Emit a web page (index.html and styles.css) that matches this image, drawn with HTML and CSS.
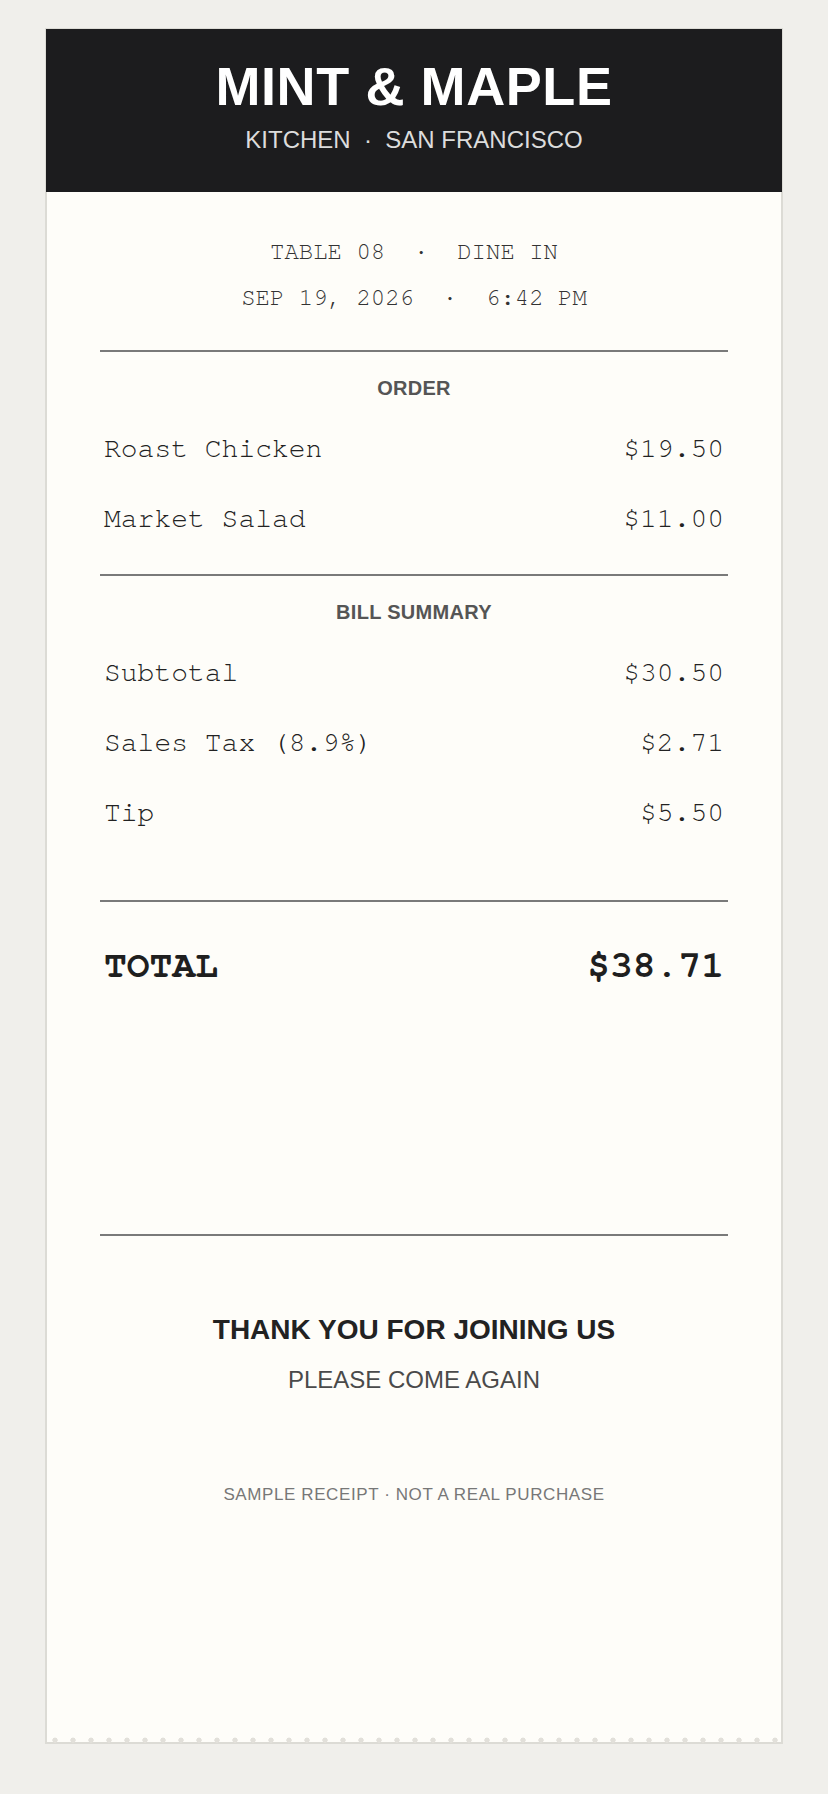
FILE: index.html
```html
<!DOCTYPE html>
<html lang="en">
<head>
<meta charset="utf-8">
<title>Mint &amp; Maple — Receipt</title>
<link rel="stylesheet" href="styles.css">
</head>
<body>
<main class="receipt">
  <header class="receipt-head">
    <h1 class="brand">MINT &amp; MAPLE</h1>
    <p class="brand-sub">KITCHEN &nbsp;·&nbsp; SAN FRANCISCO</p>
  </header>
  <div class="paper">
    <div class="meta">
      <p class="meta-line">TABLE 08 &nbsp;·&nbsp; DINE IN</p>
      <p class="meta-line">SEP 19, 2026 &nbsp;·&nbsp; 6:42 PM</p>
    </div>
    <hr class="rule">
    <section class="block">
      <h2 class="block-title">ORDER</h2>
      <div class="line"><span>Roast Chicken</span><span>$19.50</span></div>
      <div class="line"><span>Market Salad</span><span>$11.00</span></div>
    </section>
    <hr class="rule">
    <section class="block block-summary">
      <h2 class="block-title">BILL SUMMARY</h2>
      <div class="line"><span>Subtotal</span><span>$30.50</span></div>
      <div class="line"><span>Sales Tax (8.9%)</span><span>$2.71</span></div>
      <div class="line"><span>Tip</span><span>$5.50</span></div>
    </section>
    <hr class="rule">
    <div class="total"><span>TOTAL</span><span>$38.71</span></div>
    <hr class="rule">
    <footer class="thanks">
      <p class="thanks-title">THANK YOU FOR JOINING US</p>
      <p class="thanks-sub">PLEASE COME AGAIN</p>
      <p class="thanks-note">SAMPLE RECEIPT · NOT A REAL PURCHASE</p>
    </footer>
    <div class="edge"></div>
  </div>
</main>
</body>
</html>
```
FILE: styles.css
```css
* { box-sizing: border-box; }

html, body {
  margin: 0;
  padding: 0;
}

body {
  background: #f0efeb;
  padding: 28px 45px 49px;
  font-family: "Liberation Sans", Arial, Helvetica, sans-serif;
}

.receipt {
  width: 738px;
  margin: 0 auto;
  border: 1px solid #dcdbd5;
  background: #fefdf9;
}

.receipt-head {
  background: #1c1c1e;
  padding: 28px 24px 37px;
  text-align: center;
}

.brand {
  margin: 0;
  font-size: 54px;
  line-height: 1.1;
  font-weight: 700;
  color: #ffffff;
  letter-spacing: 0.6px;
}

.brand-sub {
  margin: 10px 0 0;
  font-size: 24px;
  line-height: 1.2;
  color: #dcdcdc;
}

.paper {
  padding: 36px 54px 0;
  box-shadow: inset 1px 0 0 #dcdbd5, inset -1px 0 0 #dcdbd5, inset 0 -1px 0 #dcdbd5;
  font-family: "Nimbus Mono PS", "Nimbus Mono L", "Nimbus Mono", "TeX Gyre Cursor", "Courier 10 Pitch", "Cutive Mono", "Courier Prime", "FreeMono", "Courier New", "Liberation Mono", monospace;
}

.meta {
  text-align: center;
  color: #333333;
}

.meta-line {
  margin: 0;
  font-size: 24px;
  line-height: 46px;
}

.rule {
  margin: 30px 0 0;
  border: 0;
  height: 2px;
  background: #7a7a7a;
}

.block {
  padding: 24px 0 22px;
}

.block-summary {
  padding-bottom: 54px;
}

.block + .rule,
.total + .rule {
  margin-top: 0;
}

.block-title {
  margin: 0 0 12px;
  font-family: "Liberation Sans", Arial, Helvetica, sans-serif;
  font-size: 20px;
  line-height: 24px;
  font-weight: 700;
  letter-spacing: 0.3px;
  color: #555555;
  text-align: center;
}

.line {
  display: flex;
  justify-content: space-between;
  padding: 0 4px;
  font-size: 28px;
  line-height: 70px;
  color: #222222;
}

.total {
  display: flex;
  justify-content: space-between;
  padding: 36px 4px 248px;
  font-size: 38px;
  line-height: 48px;
  font-weight: 700;
  color: #1f1f1f;
}

.thanks {
  padding-top: 77px;
  text-align: center;
  font-family: "Liberation Sans", Arial, Helvetica, sans-serif;
}

.thanks-title {
  margin: 0;
  font-size: 28px;
  line-height: 34px;
  font-weight: 700;
  color: #222222;
}

.thanks-sub {
  margin: 18px 0 0;
  font-size: 24px;
  line-height: 30px;
  color: #4a4a4a;
}

.thanks-note {
  margin: 89px 0 0;
  font-size: 17px;
  line-height: 22px;
  letter-spacing: 0.6px;
  color: #777777;
}

.edge {
  height: 6px;
  margin: 231px -54px 0;
  background-image: radial-gradient(circle at 9px 3.2px, #e2e0da 2.4px, transparent 2.9px);
  background-size: 18px 6px;
  background-repeat: repeat-x;
}
```
